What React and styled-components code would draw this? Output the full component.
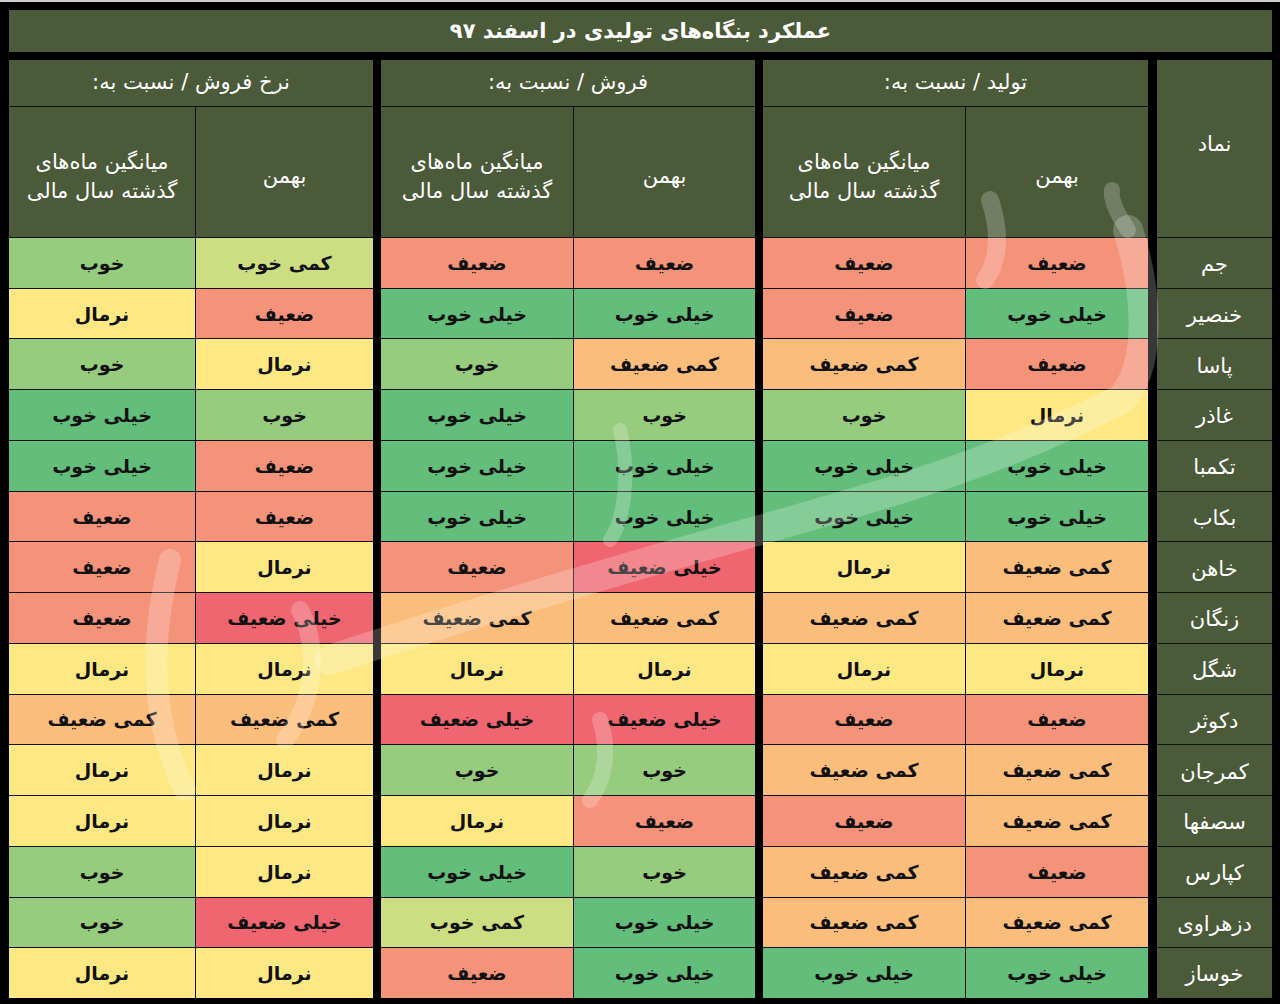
import React from "react";
import styled, { createGlobalStyle } from "styled-components";

const GlobalStyle = createGlobalStyle`
  html, body {
    margin: 0;
    padding: 0;
    background: #000;
  }
  body {
    font-family: "DejaVu Sans", "Noto Sans", sans-serif;
  }
`;

// rating -> cell colour (excel style colour scale)
const colors = {
  "خیلی خوب": "#63be7b",
  "خوب": "#97cb7e",
  "کمی خوب": "#cddd82",
  "نرمال": "#fde883",
  "کمی ضعیف": "#fbbd7b",
  "ضعیف": "#f5937a",
  "خیلی ضعیف": "#ef6670",
};

const rows = [
  ["جم", "ضعیف", "ضعیف", "ضعیف", "ضعیف", "کمی خوب", "خوب"],
  ["خنصیر", "خیلی خوب", "ضعیف", "خیلی خوب", "خیلی خوب", "ضعیف", "نرمال"],
  ["پاسا", "ضعیف", "کمی ضعیف", "کمی ضعیف", "خوب", "نرمال", "خوب"],
  ["غاذر", "نرمال", "خوب", "خوب", "خیلی خوب", "خوب", "خیلی خوب"],
  ["تکمبا", "خیلی خوب", "خیلی خوب", "خیلی خوب", "خیلی خوب", "ضعیف", "خیلی خوب"],
  ["بکاب", "خیلی خوب", "خیلی خوب", "خیلی خوب", "خیلی خوب", "ضعیف", "ضعیف"],
  ["خاهن", "کمی ضعیف", "نرمال", "خیلی ضعیف", "ضعیف", "نرمال", "ضعیف"],
  ["زنگان", "کمی ضعیف", "کمی ضعیف", "کمی ضعیف", "کمی ضعیف", "خیلی ضعیف", "ضعیف"],
  ["شگل", "نرمال", "نرمال", "نرمال", "نرمال", "نرمال", "نرمال"],
  ["دکوثر", "ضعیف", "ضعیف", "خیلی ضعیف", "خیلی ضعیف", "کمی ضعیف", "کمی ضعیف"],
  ["کمرجان", "کمی ضعیف", "کمی ضعیف", "خوب", "خوب", "نرمال", "نرمال"],
  ["سصفها", "کمی ضعیف", "ضعیف", "ضعیف", "نرمال", "نرمال", "نرمال"],
  ["کپارس", "ضعیف", "کمی ضعیف", "خوب", "خیلی خوب", "نرمال", "خوب"],
  ["دزهراوی", "کمی ضعیف", "کمی ضعیف", "خیلی خوب", "کمی خوب", "خیلی ضعیف", "خوب"],
  ["خوساز", "خیلی خوب", "خیلی خوب", "خیلی خوب", "ضعیف", "نرمال", "نرمال"],
];

const groups = [
  { title: "تولید / نسبت به:", cols: [182, 202], offset: 1 },
  { title: "فروش / نسبت به:", cols: [181, 192], offset: 3 },
  { title: "نرخ فروش / نسبت به:", cols: [177, 186], offset: 5 },
];

function App() {
  return (
    <>
      <GlobalStyle />
      <Page>
        <Title>عملکرد بنگاه‌های تولیدی در اسفند ۹۷</Title>
        <Body>
          <Group $cols="115px">
            <HeadCell $span={2}>نماد</HeadCell>
            {rows.map((r) => (
              <NameCell key={r[0]}>{r[0]}</NameCell>
            ))}
          </Group>
          {groups.map((g) => (
            <Group key={g.title} $cols={`${g.cols[0]}px ${g.cols[1]}px`}>
              <GroupHead>{g.title}</GroupHead>
              <HeadCell>بهمن</HeadCell>
              <HeadCell>
                میانگین ماه‌های
                <br />
                گذشته سال مالی
              </HeadCell>
              {rows.map((r) => (
                <React.Fragment key={r[0]}>
                  <Cell $bg={colors[r[g.offset]]}>{r[g.offset]}</Cell>
                  <Cell $bg={colors[r[g.offset + 1]]}>{r[g.offset + 1]}</Cell>
                </React.Fragment>
              ))}
            </Group>
          ))}
          <Watermark viewBox="0 0 1280 1004" aria-hidden="true">
            <g
              fill="none"
              stroke="#ffffff"
              strokeOpacity="0.22"
              strokeLinecap="round"
              strokeLinejoin="round"
            >
              <path
                d="M330 660 C 450 620, 600 575, 760 530 S 1000 460, 1120 400 C 1150 370, 1150 300, 1128 230"
                strokeWidth="30"
              />
              <path d="M1128 230 C 1118 215, 1110 200, 1112 190" strokeWidth="16" />
              <path d="M990 200 C 1000 230, 1000 260, 985 280" strokeWidth="18" />
              <path d="M170 560 C 150 640, 150 720, 185 790" strokeWidth="22" />
              <path d="M300 610 C 320 650, 315 700, 285 740" strokeWidth="18" />
              <path d="M600 720 C 610 750, 605 780, 590 800" strokeWidth="16" />
              <path d="M620 430 C 630 470, 625 520, 610 540" strokeWidth="14" />
            </g>
          </Watermark>
        </Body>
      </Page>
    </>
  );
}

const Page = styled.div`
  width: 1280px;
  height: 1004px;
  box-sizing: border-box;
  background: #000;
  border-top: 2px solid #cfcfcf;
  padding: 8px 8px 0 9px;
  direction: rtl;
  display: flex;
  flex-direction: column;
  gap: 8px;
  overflow: hidden;
`;

const Title = styled.div`
  height: 42px;
  background: #4b5a39;
  color: #fff;
  font-size: 21px;
  font-weight: bold;
  display: flex;
  align-items: center;
  justify-content: center;
`;

const Body = styled.div`
  position: relative;
  display: flex;
  gap: 8px;
  height: 938px;
`;

const Group = styled.div`
  display: grid;
  grid-template-columns: ${(p) => p.$cols};
  grid-template-rows: 46px 130px repeat(15, 1fr);
  gap: 1px;
  background: #111;
  &:first-child {
    margin-left: 1px;
  }
`;

const HeadBase = styled.div`
  background: #4b5a39;
  color: #fff;
  font-size: 21px;
  display: flex;
  align-items: center;
  justify-content: center;
  text-align: center;
  line-height: 1.4;
`;

const GroupHead = styled(HeadBase)`
  grid-column: 1 / -1;
`;

const HeadCell = styled(HeadBase)`
  grid-row: span ${(p) => p.$span || 1};
  padding-top: ${(p) => (p.$span ? "0" : "10px")};
  padding-bottom: ${(p) => (p.$span ? "8px" : "0")};
`;

const NameCell = styled(HeadBase)`
  font-size: 21px;
  padding-top: 4px;
`;

const Cell = styled.div`
  background: ${(p) => p.$bg};
  color: #111;
  font-size: 19px;
  font-weight: bold;
  display: flex;
  align-items: center;
  justify-content: center;
`;

const Watermark = styled.svg`
  position: absolute;
  left: -9px;
  top: -60px;
  width: 1280px;
  height: 1004px;
  pointer-events: none;
`;

export default App;
